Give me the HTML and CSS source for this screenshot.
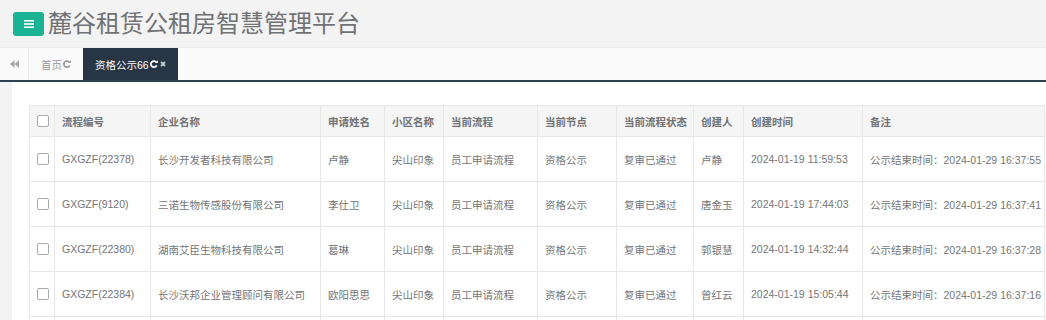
FILE: index.html
```html
<!DOCTYPE html>
<html lang="zh-CN">
<head>
  <meta charset="UTF-8" />
  <title>麓谷租赁公租房智慧管理平台</title>
  <link rel="stylesheet" href="styles.css">
</head>
<body>

<div class="header">
  <a class="menu-btn" href="#">
    <svg width="10" height="8" viewBox="0 0 10 8"><rect y="0" width="10" height="1.6" fill="#fff"/><rect y="3.2" width="10" height="1.6" fill="#fff"/><rect y="6.4" width="10" height="1.6" fill="#fff"/></svg>
  </a>
  <span class="title">麓谷租赁公租房智慧管理平台</span>
</div>

<div class="tabs">
  <a class="tab-left" href="#">
    <svg width="9" height="8" viewBox="0 0 9 8"><path d="M4.5 0 L0 4 L4.5 8 Z M9 0 L4.5 4 L9 8 Z" fill="#a7a9ab"/></svg>
  </a>
  <a class="tab" href="#">首页<svg class="ico-refresh" width="8" height="8" viewBox="0 0 10 10"><path d="M8.2 3.2 A3.8 3.8 0 1 0 8.4 6.6" fill="none" stroke="currentColor" stroke-width="2.2"/><path d="M6.2 3.8 L9.8 3.8 L9.8 0.2 Z" fill="currentColor"/></svg></a>
  <a class="tab active" href="#">资格公示66<svg class="ico-refresh" width="8" height="8" viewBox="0 0 10 10"><path d="M8.2 3.2 A3.8 3.8 0 1 0 8.4 6.6" fill="none" stroke="currentColor" stroke-width="2.2"/><path d="M6.2 3.8 L9.8 3.8 L9.8 0.2 Z" fill="currentColor"/></svg><svg class="ico-close" width="6" height="6" viewBox="0 0 6 6"><path d="M1 1 L5 5 M5 1 L1 5" stroke="#c9ccd0" stroke-width="1.8"/></svg></a>
</div>

<div class="main">
  <div class="panel">
    <table class="grid">
      <colgroup>
        <col style="width:25px"><col style="width:96px"><col style="width:170px"><col style="width:64px">
        <col style="width:59px"><col style="width:94px"><col style="width:79px"><col style="width:77px">
        <col style="width:50px"><col style="width:119px"><col>
      </colgroup>
      <thead>
        <tr>
          <th class="chk"><input type="checkbox"></th>
          <th>流程编号</th><th>企业名称</th><th>申请姓名</th><th>小区名称</th><th>当前流程</th>
          <th>当前节点</th><th>当前流程状态</th><th>创建人</th><th>创建时间</th><th>备注</th>
        </tr>
      </thead>
      <tbody>
        <tr>
          <td class="chk"><input type="checkbox"></td>
          <td>GXGZF(22378)</td><td>长沙开发者科技有限公司</td><td>卢静</td><td>尖山印象</td><td>员工申请流程</td>
          <td>资格公示</td><td>复审已通过</td><td>卢静</td><td>2024-01-19 11:59:53</td><td>公示结束时间：2024-01-29 16:37:55</td>
        </tr>
        <tr>
          <td class="chk"><input type="checkbox"></td>
          <td>GXGZF(9120)</td><td>三诺生物传感股份有限公司</td><td>李仕卫</td><td>尖山印象</td><td>员工申请流程</td>
          <td>资格公示</td><td>复审已通过</td><td>唐金玉</td><td>2024-01-19 17:44:03</td><td>公示结束时间：2024-01-29 16:37:41</td>
        </tr>
        <tr>
          <td class="chk"><input type="checkbox"></td>
          <td>GXGZF(22380)</td><td>湖南艾臣生物科技有限公司</td><td>葛琳</td><td>尖山印象</td><td>员工申请流程</td>
          <td>资格公示</td><td>复审已通过</td><td>郭银慧</td><td>2024-01-19 14:32:44</td><td>公示结束时间：2024-01-29 16:37:28</td>
        </tr>
        <tr>
          <td class="chk"><input type="checkbox"></td>
          <td>GXGZF(22384)</td><td>长沙沃邦企业管理顾问有限公司</td><td>欧阳思思</td><td>尖山印象</td><td>员工申请流程</td>
          <td>资格公示</td><td>复审已通过</td><td>曾红云</td><td>2024-01-19 15:05:44</td><td>公示结束时间：2024-01-29 16:37:16</td>
        </tr>
        <tr>
          <td class="chk"></td><td></td><td></td><td></td><td></td><td></td><td></td><td></td><td></td><td></td><td></td>
        </tr>
      </tbody>
    </table>
  </div>
</div>

</body>
</html>
```

FILE: styles.css
```css
body {
  margin: 0;
  font-family: 'Liberation Sans', 'Noto Sans CJK SC', sans-serif;
  font-size: 10.5px;
  color: #676a6c;
  background: #f3f3f4;
  overflow: hidden;
}

a {
  text-decoration: none;
}

.header {
  height: 47px;
  display: flex;
  align-items: center;
  padding-left: 13px;
  background: #f3f3f4;
}

.menu-btn {
  width: 31px;
  height: 24px;
  background: #1ab394;
  border-radius: 3px;
  display: flex;
  align-items: center;
  justify-content: center;
}

.title {
  margin-left: 4px;
  font-size: 24px;
  color: #707274;
  line-height: 1;
}

.tabs {
  display: flex;
  height: 32px;
  background: #fafafa;
  border-top: 1px solid #e7eaec;
  border-bottom: 2px solid #2f4050;
}

.tab-left {
  width: 28px;
  border-right: 1px solid #e7eaec;
  display: flex;
  align-items: center;
  justify-content: center;
}

.tab {
  display: flex;
  align-items: center;
  padding: 0 12px;
  color: #999;
}

.tab.active {
  background: #273544;
  color: #fff;
}

.ico-refresh {
  margin-left: 1px;
}

.ico-close {
  margin-left: 2px;
}

.main {
  padding-left: 12px;
}

.panel {
  background: #fff;
  padding: 23px 1px 0 17px;
  height: 300px;
}

.grid {
  width: 100%;
  table-layout: fixed;
  border-collapse: collapse;
  border: 1px solid #e7e7e7;
}

.grid th,
.grid td {
  border: 1px solid #e7e7e7;
  padding: 0 7px;
  text-align: left;
  vertical-align: middle;
  white-space: nowrap;
  overflow: hidden;
}

.grid th {
  height: 30px;
  background: #f5f5f6;
  font-weight: bold;
  color: #707274;
}

.grid td {
  height: 44px;
  color: #737577;
}

.grid .chk {
  padding: 0 0 0 7px;
}

.grid input {
  appearance: none;
  margin: 0;
  width: 12px;
  height: 12px;
  display: block;
  background: #fff;
  border: 1px solid #a9abad;
  border-radius: 2px;
}
```
